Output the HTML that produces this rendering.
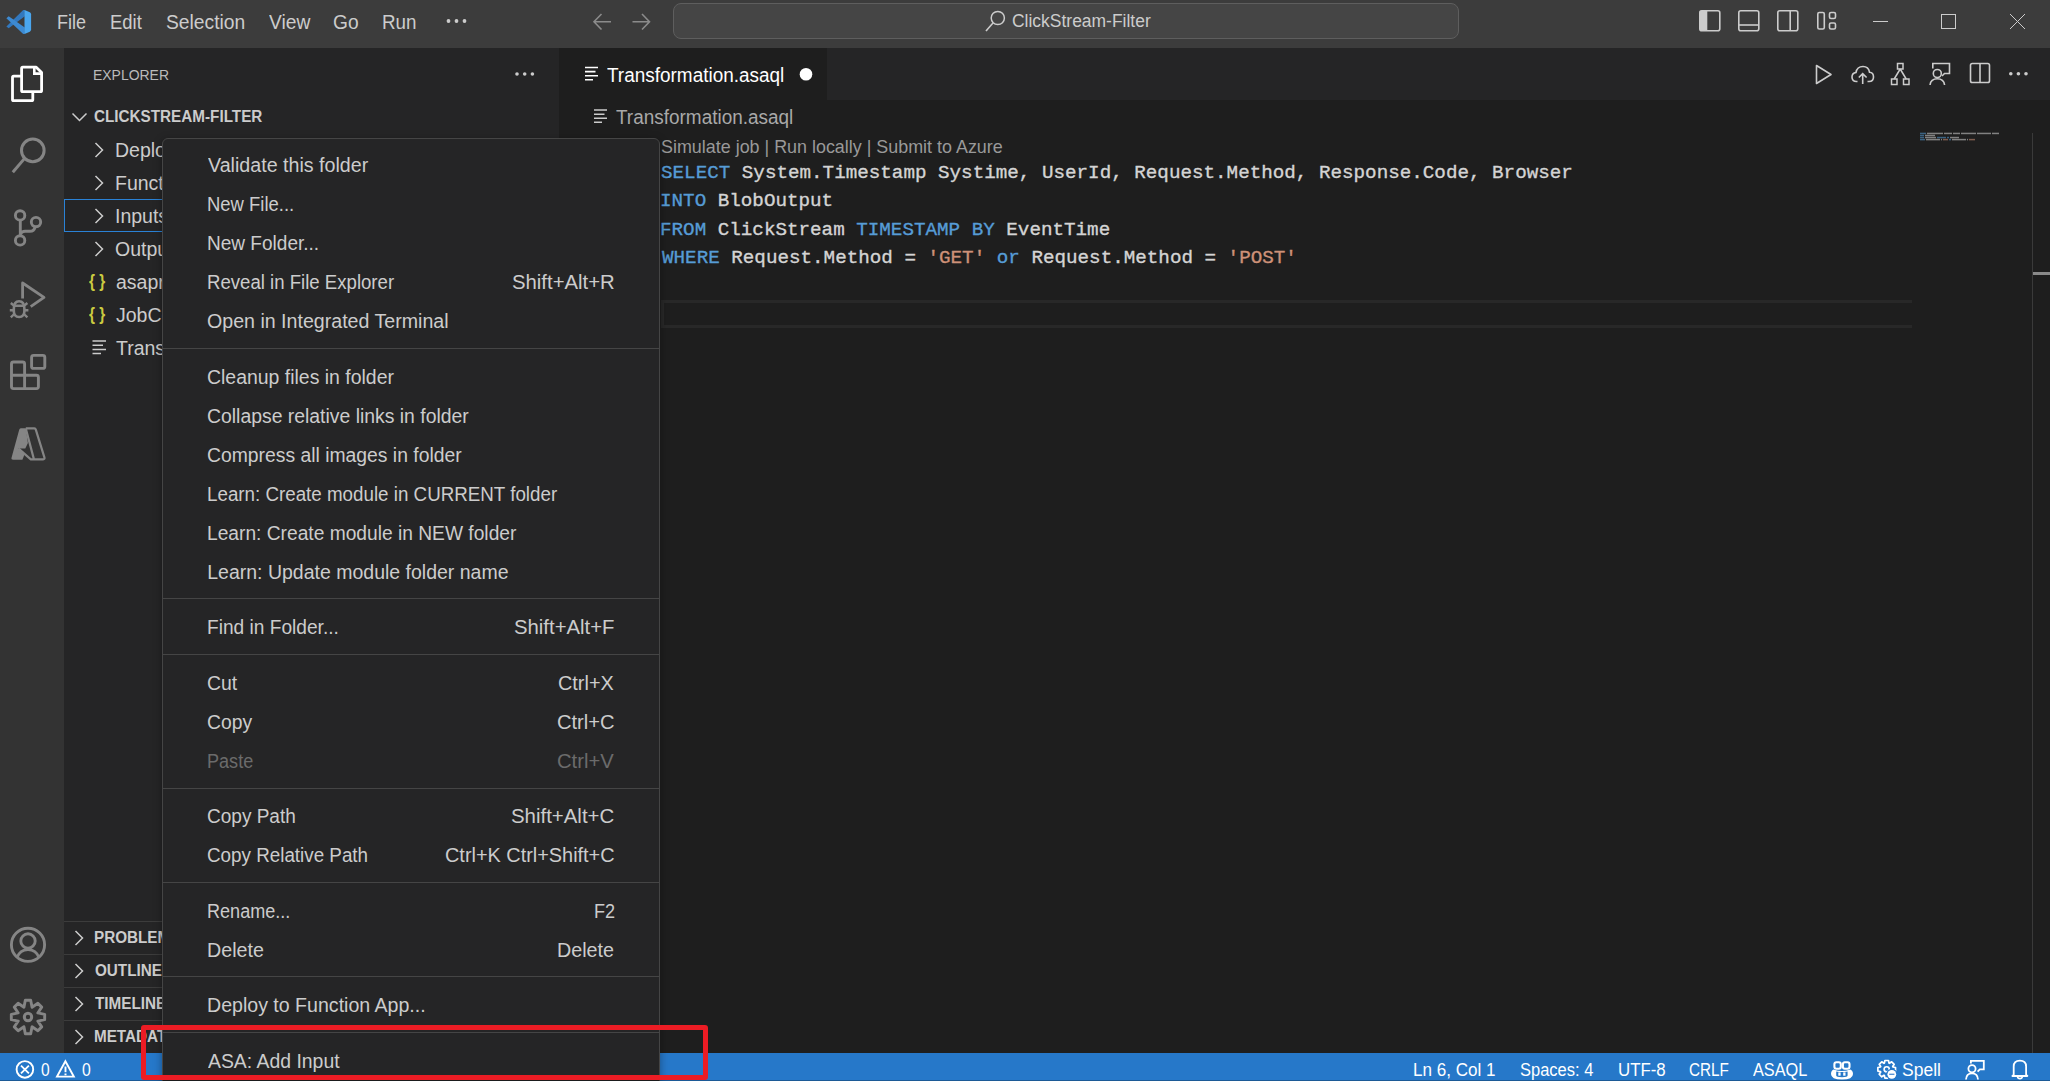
<!DOCTYPE html>
<html><head><meta charset="utf-8"><title>VS Code</title>
<style>
html,body{margin:0;padding:0;width:2050px;height:1081px;overflow:hidden;background:#1e1e1e;}
body{position:relative;font-family:'Liberation Sans', sans-serif;}
.t{position:absolute;white-space:pre;line-height:30px;height:30px;transform-origin:0 0;}
svg{overflow:visible;}
</style></head><body>
<div style="position:absolute;left:0px;top:0px;width:2050px;height:48px;background:#3c3c3c;"></div>
<div style="position:absolute;left:0px;top:48px;width:64px;height:1005px;background:#333333;"></div>
<div style="position:absolute;left:64px;top:48px;width:495px;height:1005px;background:#252526;"></div>
<div style="position:absolute;left:559px;top:48px;width:1491px;height:1005px;background:#1e1e1e;"></div>
<div style="position:absolute;left:559px;top:48px;width:1491px;height:52px;background:#252526;"></div>
<div style="position:absolute;left:559px;top:48px;width:268px;height:52px;background:#1e1e1e;"></div>
<div style="position:absolute;left:0px;top:1053px;width:2050px;height:28px;background:#2678c9;"></div>
<svg style="position:absolute;left:0;top:0" width="40" height="48" viewBox="0 0 40 48" fill="none"><path d="M6.4 26.4 L8.7 28.3 L24.8 16.3 V10.0 L23.2 9.9 Z" fill="#3278be"/><path d="M6.4 18.2 L8.7 16.2 L24.8 27.4 V33.8 L23.2 34.0 Z" fill="#3d8ad2"/><path d="M24.5 9.9 L29.8 12.2 Q31.1 12.9 31.1 14.3 V29.6 Q31.1 31.0 29.8 31.7 L24.5 34.0 Z" fill="#4aa6ee"/></svg>
<div class="t" style="left:56.52px;top:7.20px;font-size:20.5px;color:#cccccc;font-weight:normal;font-family:'Liberation Sans', sans-serif;transform:scaleX(0.8781);">File</div>
<div class="t" style="left:109.60px;top:7.20px;font-size:20.5px;color:#cccccc;font-weight:normal;font-family:'Liberation Sans', sans-serif;transform:scaleX(0.9000);">Edit</div>
<div class="t" style="left:165.76px;top:7.20px;font-size:20.5px;color:#cccccc;font-weight:normal;font-family:'Liberation Sans', sans-serif;transform:scaleX(0.9398);">Selection</div>
<div class="t" style="left:268.80px;top:7.20px;font-size:20.5px;color:#cccccc;font-weight:normal;font-family:'Liberation Sans', sans-serif;transform:scaleX(0.9364);">View</div>
<div class="t" style="left:332.77px;top:7.20px;font-size:20.5px;color:#cccccc;font-weight:normal;font-family:'Liberation Sans', sans-serif;transform:scaleX(0.9346);">Go</div>
<div class="t" style="left:382.08px;top:7.20px;font-size:20.5px;color:#cccccc;font-weight:normal;font-family:'Liberation Sans', sans-serif;transform:scaleX(0.9167);">Run</div>
<svg style="position:absolute;left:445px;top:15px;" width="24" height="12" viewBox="0 0 24 12" fill="none"><circle cx="3.5" cy="6" r="1.9" fill="#cccccc"/><circle cx="11.5" cy="6" r="1.9" fill="#cccccc"/><circle cx="19.5" cy="6" r="1.9" fill="#cccccc"/></svg>
<svg style="position:absolute;left:590px;top:10px;" width="24" height="24" viewBox="0 0 24 24" fill="none"><path d="M4 11.7 H21 M11.5 4 L4 11.7 L11.5 19.5" stroke="#8b8b8b" stroke-width="1.6"/></svg>
<svg style="position:absolute;left:630px;top:10px;" width="24" height="24" viewBox="0 0 24 24" fill="none"><path d="M2.5 11.7 H19.5 M12 4 L19.5 11.7 L12 19.5" stroke="#8b8b8b" stroke-width="1.6"/></svg>
<div style="position:absolute;left:673px;top:3px;width:786px;height:36px;background:#454545;border:1px solid #5e5e5e;border-radius:8px;box-sizing:border-box;"></div>
<svg style="position:absolute;left:982px;top:8px;" width="24" height="26" viewBox="0 0 24 26" fill="none"><circle cx="15.8" cy="10" r="6.6" stroke="#cccccc" stroke-width="1.5"/><path d="M11.2 14.8 L4 23" stroke="#cccccc" stroke-width="1.6"/></svg>
<div class="t" style="left:1012.49px;top:6.45px;font-size:19.2px;color:#cccccc;font-weight:normal;font-family:'Liberation Sans', sans-serif;transform:scaleX(0.9099);">ClickStream-Filter</div>
<svg style="position:absolute;left:1697px;top:8px;" width="26" height="26" viewBox="0 0 26 26" fill="none"><rect x="2.8" y="2.8" width="20" height="20" rx="2" stroke="#cccccc" stroke-width="1.6"/><rect x="2.8" y="2.8" width="7.5" height="20" fill="#cccccc"/></svg>
<svg style="position:absolute;left:1736px;top:8px;" width="26" height="26" viewBox="0 0 26 26" fill="none"><rect x="2.8" y="2.8" width="20" height="20" rx="2" stroke="#cccccc" stroke-width="1.6"/><path d="M2.8 17 H22.8" stroke="#cccccc" stroke-width="1.6"/></svg>
<svg style="position:absolute;left:1775px;top:8px;" width="26" height="26" viewBox="0 0 26 26" fill="none"><rect x="2.8" y="2.8" width="20" height="20" rx="2" stroke="#cccccc" stroke-width="1.6"/><path d="M15.2 2.8 V22.8" stroke="#cccccc" stroke-width="1.6"/></svg>
<svg style="position:absolute;left:1815px;top:8px;" width="26" height="26" viewBox="0 0 26 26" fill="none"><rect x="2.8" y="4.5" width="6.5" height="16.5" rx="1.5" stroke="#cccccc" stroke-width="1.6"/><rect x="14.5" y="4.5" width="6" height="6" rx="1.5" stroke="#cccccc" stroke-width="1.6"/><rect x="14.5" y="15" width="6" height="6" rx="1.5" stroke="#cccccc" stroke-width="1.6"/></svg>
<svg style="position:absolute;left:1870px;top:10px;" width="22" height="22" viewBox="0 0 22 22" fill="none"><path d="M3 11.5 H18" stroke="#cccccc" stroke-width="1"/></svg>
<svg style="position:absolute;left:1938px;top:10px;" width="22" height="22" viewBox="0 0 22 22" fill="none"><rect x="3.5" y="4.5" width="14" height="14" stroke="#cccccc" stroke-width="1"/></svg>
<svg style="position:absolute;left:2007px;top:10px;" width="22" height="22" viewBox="0 0 22 22" fill="none"><path d="M3 4 L18 19 M18 4 L3 19" stroke="#cccccc" stroke-width="1"/></svg>
<svg style="position:absolute;left:0;top:0" width="64" height="1053" viewBox="0 0 64 1053" fill="none">
<path d="M21.6 68.4 Q21.6 67.2 22.8 67.2 H36.2 L41.6 72.6 V90.5 Q41.6 91.7 40.4 91.7 H22.8 Q21.6 91.7 21.6 90.5 Z" stroke="#ffffff" stroke-width="2.8" stroke-linejoin="round"/>
<path d="M34.3 67.5 V73.6 H41.4" stroke="#ffffff" stroke-width="2.6"/>
<path d="M21.6 76.2 H13.7 Q12.5 76.2 12.5 77.4 V99.4 Q12.5 100.6 13.7 100.6 H31.6 Q32.8 100.6 32.8 99.4 V91.7" stroke="#ffffff" stroke-width="2.8" stroke-linejoin="round"/>

<circle cx="32.8" cy="150.4" r="11.3" stroke="#858585" stroke-width="3"/>
<path d="M24.4 158.6 L12.8 172.2" stroke="#858585" stroke-width="3"/>

<circle cx="20.1" cy="215.4" r="4.7" stroke="#858585" stroke-width="2.9"/>
<circle cx="20.1" cy="240.4" r="4.7" stroke="#858585" stroke-width="2.9"/>
<circle cx="36" cy="222.1" r="4.7" stroke="#858585" stroke-width="2.9"/>
<path d="M20.3 220 V235.5 M20.3 234.5 Q21.8 231.3 25 231.3 H30 Q34 231.3 35.2 226.8" stroke="#858585" stroke-width="2.9"/>

<path d="M22.6 298.6 V283 L44 297.4 L30.7 306.6" stroke="#858585" stroke-width="2.8" stroke-linejoin="round"/>
<path d="M13.8 309 Q13.8 301.3 19.1 301.3 Q24.4 301.3 24.4 309 V311 Q24.4 317 19.1 317 Q13.8 317 13.8 311 Z" stroke="#858585" stroke-width="2.6"/>
<path d="M14 305.8 H24.2 M10.8 303 L14.5 306 M27.4 303 L23.7 306 M9.8 310.2 H13.8 M28.4 310.2 H24.4 M10.8 317.3 L14.3 314 M27.4 317.3 L23.9 314" stroke="#858585" stroke-width="2.4"/>

<path d="M13.5 362 H22.6 Q24.6 362 24.6 364 V375.2 H36.4 Q38.4 375.2 38.4 377.2 V386.6 Q38.4 388.6 36.4 388.6 H13.5 Q11.5 388.6 11.5 386.6 V364 Q11.5 362 13.5 362 Z M11.5 375.2 H24.6 V388.6" stroke="#858585" stroke-width="2.9" stroke-linejoin="round"/>
<rect x="31.6" y="355.4" width="13.2" height="13" rx="2" stroke="#858585" stroke-width="2.9"/>

<path d="M20.8 428.2 H25.8 L27.9 443 L25.3 448.4 H18.4 L24.6 454.2 L22.4 459.8 H13.2 Q10.9 459.8 11.6 457.6 L19.2 429.8 Q19.6 428.2 20.8 428.2 Z" fill="#858585"/>
<path d="M25.8 428.3 H34.4 Q35.4 428.3 35.8 429.6 L44.4 457.3 Q45 459.3 43.2 459.3 H30.8 L18.6 448.6 M25.8 428.6 L33.9 459.1" stroke="#858585" stroke-width="2.2" stroke-linejoin="round"/>

<circle cx="28" cy="944.8" r="16.6" stroke="#858585" stroke-width="2.9"/>
<circle cx="28" cy="941" r="7.2" stroke="#858585" stroke-width="2.9"/>
<path d="M17 957.6 Q20 949.6 28 949.6 Q36 949.6 39 957.6" stroke="#858585" stroke-width="2.9"/>

<path d="M44.68 1014.31 L44.68 1019.69 L37.79 1021.06 L41.70 1026.89 L37.89 1030.70 L32.06 1026.79 L30.69 1033.68 L25.31 1033.68 L23.94 1026.79 L18.11 1030.70 L14.30 1026.89 L18.21 1021.06 L11.32 1019.69 L11.32 1014.31 L18.21 1012.94 L14.30 1007.11 L18.11 1003.30 L23.94 1007.21 L25.31 1000.32 L30.69 1000.32 L32.06 1007.21 L37.89 1003.30 L41.70 1007.11 L37.79 1012.94 Z" stroke="#858585" stroke-width="2.9" stroke-linejoin="round"/>
<circle cx="28" cy="1017" r="3.7" stroke="#858585" stroke-width="3"/>
</svg>
<div class="t" style="left:93.40px;top:60.43px;font-size:15.5px;color:#bbbbbb;font-weight:normal;font-family:'Liberation Sans', sans-serif;transform:scaleX(0.9000);">EXPLORER</div>
<svg style="position:absolute;left:513px;top:66px;" width="24" height="16" viewBox="0 0 24 16" fill="none"><circle cx="4.0" cy="8" r="1.8" fill="#cccccc"/><circle cx="11.7" cy="8" r="1.8" fill="#cccccc"/><circle cx="19.4" cy="8" r="1.8" fill="#cccccc"/></svg>
<svg style="position:absolute;left:68px;top:108px;" width="22" height="18" viewBox="0 0 22 18" fill="none"><path d="M4.5 5.5 L11.5 12.5 L18.5 5.5" stroke="#cccccc" stroke-width="1.5"/></svg>
<div class="t" style="left:94.20px;top:102.46px;font-size:16px;color:#cccccc;font-weight:bold;font-family:'Liberation Sans', sans-serif;transform:scaleX(0.9534);">CLICKSTREAM-FILTER</div>
<div style="position:absolute;left:64px;top:199px;width:495px;height:33px;background:transparent;border:1px solid #2a82d6;box-sizing:border-box;"></div>
<svg style="position:absolute;left:90px;top:140px;" width="18" height="20" viewBox="0 0 18 20" fill="none"><path d="M5.5 3 L12.5 10 L5.5 17" stroke="#cccccc" stroke-width="1.5"/></svg>
<div class="t" style="left:115.00px;top:135.24px;font-size:19.5px;color:#cccccc;font-weight:normal;font-family:'Liberation Sans', sans-serif;">Deployment</div>
<svg style="position:absolute;left:90px;top:173px;" width="18" height="20" viewBox="0 0 18 20" fill="none"><path d="M5.5 3 L12.5 10 L5.5 17" stroke="#cccccc" stroke-width="1.5"/></svg>
<div class="t" style="left:115.00px;top:168.24px;font-size:19.5px;color:#cccccc;font-weight:normal;font-family:'Liberation Sans', sans-serif;">Functions</div>
<svg style="position:absolute;left:90px;top:206px;" width="18" height="20" viewBox="0 0 18 20" fill="none"><path d="M5.5 3 L12.5 10 L5.5 17" stroke="#cccccc" stroke-width="1.5"/></svg>
<div class="t" style="left:115.00px;top:201.24px;font-size:19.5px;color:#cccccc;font-weight:normal;font-family:'Liberation Sans', sans-serif;">Inputs</div>
<svg style="position:absolute;left:90px;top:239px;" width="18" height="20" viewBox="0 0 18 20" fill="none"><path d="M5.5 3 L12.5 10 L5.5 17" stroke="#cccccc" stroke-width="1.5"/></svg>
<div class="t" style="left:115.00px;top:234.24px;font-size:19.5px;color:#cccccc;font-weight:normal;font-family:'Liberation Sans', sans-serif;">Outputs</div>
<div class="t" style="left:88.60px;top:266.26px;font-size:18px;color:#cbcb41;font-weight:bold;font-family:'Liberation Sans', sans-serif;transform:scaleX(0.8526);">{ }</div>
<div class="t" style="left:116.00px;top:267.24px;font-size:19.5px;color:#cccccc;font-weight:normal;font-family:'Liberation Sans', sans-serif;">asaproj.json</div>
<div class="t" style="left:88.60px;top:299.26px;font-size:18px;color:#cbcb41;font-weight:bold;font-family:'Liberation Sans', sans-serif;transform:scaleX(0.8526);">{ }</div>
<div class="t" style="left:116.00px;top:300.24px;font-size:19.5px;color:#cccccc;font-weight:normal;font-family:'Liberation Sans', sans-serif;">JobConfig.json</div>
<svg style="position:absolute;left:90px;top:339px;" width="18" height="16" viewBox="0 0 18 16" fill="none"><path d="M2.5 2 H16 M2.5 6.3 H13 M2.5 10.5 H16 M2.5 14.5 H11" stroke="#cccccc" stroke-width="1.6"/></svg>
<div class="t" style="left:116.00px;top:333.24px;font-size:19.5px;color:#cccccc;font-weight:normal;font-family:'Liberation Sans', sans-serif;">Transformation.asaql</div>
<div style="position:absolute;left:64px;top:921px;width:495px;height:1px;background:#3c3c3c;"></div>
<svg style="position:absolute;left:70px;top:928px;" width="18" height="20" viewBox="0 0 18 20" fill="none"><path d="M5.5 3 L12.5 10 L5.5 17" stroke="#cccccc" stroke-width="1.5"/></svg>
<div class="t" style="left:93.65px;top:922.96px;font-size:16px;color:#cccccc;font-weight:bold;font-family:'Liberation Sans', sans-serif;transform:scaleX(0.9530);">PROBLEMS</div>
<div style="position:absolute;left:64px;top:954px;width:495px;height:1px;background:#3c3c3c;"></div>
<svg style="position:absolute;left:70px;top:961px;" width="18" height="20" viewBox="0 0 18 20" fill="none"><path d="M5.5 3 L12.5 10 L5.5 17" stroke="#cccccc" stroke-width="1.5"/></svg>
<div class="t" style="left:94.60px;top:955.96px;font-size:16px;color:#cccccc;font-weight:bold;font-family:'Liberation Sans', sans-serif;transform:scaleX(0.9530);">OUTLINE</div>
<div style="position:absolute;left:64px;top:987px;width:495px;height:1px;background:#3c3c3c;"></div>
<svg style="position:absolute;left:70px;top:994px;" width="18" height="20" viewBox="0 0 18 20" fill="none"><path d="M5.5 3 L12.5 10 L5.5 17" stroke="#cccccc" stroke-width="1.5"/></svg>
<div class="t" style="left:94.60px;top:988.96px;font-size:16px;color:#cccccc;font-weight:bold;font-family:'Liberation Sans', sans-serif;transform:scaleX(0.9530);">TIMELINE</div>
<div style="position:absolute;left:64px;top:1020px;width:495px;height:1px;background:#3c3c3c;"></div>
<svg style="position:absolute;left:70px;top:1027px;" width="18" height="20" viewBox="0 0 18 20" fill="none"><path d="M5.5 3 L12.5 10 L5.5 17" stroke="#cccccc" stroke-width="1.5"/></svg>
<div class="t" style="left:93.65px;top:1021.96px;font-size:16px;color:#cccccc;font-weight:bold;font-family:'Liberation Sans', sans-serif;transform:scaleX(0.9530);">METADATA</div>
<svg style="position:absolute;left:582px;top:64px;" width="18" height="18" viewBox="0 0 18 18" fill="none"><path d="M3 3.5 H16 M3 7.6 H13.5 M3 11.7 H16 M3 15.7 H11" stroke="#ffffff" stroke-width="1.6"/></svg>
<div class="t" style="left:607.40px;top:60.14px;font-size:19.5px;color:#ffffff;font-weight:normal;font-family:'Liberation Sans', sans-serif;transform:scaleX(0.9720);">Transformation.asaql</div>
<svg style="position:absolute;left:798px;top:66px;" width="16" height="16" viewBox="0 0 16 16" fill="none"><circle cx="8" cy="8.3" r="6.3" fill="#ffffff"/></svg>
<svg style="position:absolute;left:1812px;top:62px;" width="24" height="24" viewBox="0 0 24 24" fill="none"><path d="M4.5 3.5 L19 12.5 L4.5 21.5 Z" stroke="#cccccc" stroke-width="1.6" stroke-linejoin="round"/></svg>
<svg style="position:absolute;left:1850px;top:62px;" width="26" height="24" viewBox="0 0 26 24" fill="none"><path d="M7.5 19.5 H6.5 Q2 19.5 2 15 Q2 11 6 10.5 Q7 4.5 13 4.5 Q18.5 4.5 19.5 10.2 Q23.5 10.5 23.5 15 Q23.5 19.5 19 19.5 H17.5" stroke="#cccccc" stroke-width="1.6"/><path d="M12.7 22 V12 M8.8 15.5 L12.7 11.6 L16.6 15.5" stroke="#cccccc" stroke-width="1.6"/></svg>
<svg style="position:absolute;left:1888px;top:61px;" width="26" height="26" viewBox="0 0 26 26" fill="none"><rect x="9.5" y="2.5" width="5.5" height="5.5" stroke="#cccccc" stroke-width="1.5"/><rect x="3.5" y="18" width="5.5" height="5.5" stroke="#cccccc" stroke-width="1.5"/><rect x="15.5" y="18" width="5.5" height="5.5" stroke="#cccccc" stroke-width="1.5"/><path d="M12.2 8 L6.2 18 M12.2 8 L18.2 18" stroke="#cccccc" stroke-width="1.5"/></svg>
<svg style="position:absolute;left:1928px;top:61px;" width="26" height="26" viewBox="0 0 26 26" fill="none"><path d="M4.8 7.5 V2.5 H21.5 V12.5 H16.5 L14 15" stroke="#cccccc" stroke-width="1.6"/><circle cx="9.3" cy="12.5" r="4" stroke="#cccccc" stroke-width="1.6"/><path d="M2 24 Q2.8 17.8 9.3 17.8 Q15.8 17.8 16.6 24" stroke="#cccccc" stroke-width="1.6"/></svg>
<svg style="position:absolute;left:1968px;top:61px;" width="24" height="24" viewBox="0 0 24 24" fill="none"><rect x="2.5" y="2.5" width="19" height="19" rx="1.8" stroke="#cccccc" stroke-width="1.6"/><path d="M12 2.5 V21.5" stroke="#cccccc" stroke-width="1.6"/></svg>
<svg style="position:absolute;left:2006px;top:66px;" width="26" height="16" viewBox="0 0 26 16" fill="none"><circle cx="4.8" cy="7.7" r="1.8" fill="#cccccc"/><circle cx="12.399999999999999" cy="7.7" r="1.8" fill="#cccccc"/><circle cx="20.0" cy="7.7" r="1.8" fill="#cccccc"/></svg>
<svg style="position:absolute;left:591px;top:106px;" width="18" height="18" viewBox="0 0 18 18" fill="none"><path d="M3 4 H16 M3 8.2 H13.5 M3 12.3 H16 M3 16.3 H11" stroke="#cccccc" stroke-width="1.6"/></svg>
<div class="t" style="left:616.30px;top:102.34px;font-size:19.5px;color:#a9a9a9;font-weight:normal;font-family:'Liberation Sans', sans-serif;transform:scaleX(0.9720);">Transformation.asaql</div>
<div class="t" style="left:660.59px;top:131.63px;font-size:17.8px;color:#999999;font-weight:normal;font-family:'Liberation Sans', sans-serif;transform:scaleX(1.0071);">Simulate job | Run locally | Submit to Azure</div>
<div class="t" style="left:661.00px;top:157.87px;font-size:19.24px;color:#d4d4d4;font-weight:normal;font-family:'Liberation Mono', monospace;white-space:pre;-webkit-text-stroke:0.35px currentColor;"><span style="color:#569cd6">SELECT</span><span style="color:#d4d4d4"> System.Timestamp Systime, UserId, Request.Method, Response.Code, Browser</span></div>
<div class="t" style="left:660.00px;top:186.37px;font-size:19.24px;color:#d4d4d4;font-weight:normal;font-family:'Liberation Mono', monospace;white-space:pre;-webkit-text-stroke:0.35px currentColor;"><span style="color:#569cd6">INTO</span><span style="color:#d4d4d4"> BlobOutput</span></div>
<div class="t" style="left:660.00px;top:214.87px;font-size:19.24px;color:#d4d4d4;font-weight:normal;font-family:'Liberation Mono', monospace;white-space:pre;-webkit-text-stroke:0.35px currentColor;"><span style="color:#569cd6">FROM</span><span style="color:#d4d4d4"> ClickStream </span><span style="color:#569cd6">TIMESTAMP</span><span style="color:#d4d4d4"> </span><span style="color:#569cd6">BY</span><span style="color:#d4d4d4"> EventTime</span></div>
<div class="t" style="left:662.00px;top:243.37px;font-size:19.24px;color:#d4d4d4;font-weight:normal;font-family:'Liberation Mono', monospace;white-space:pre;-webkit-text-stroke:0.35px currentColor;"><span style="color:#569cd6">WHERE</span><span style="color:#d4d4d4"> Request.Method = </span><span style="color:#ce9178">'GET'</span><span style="color:#d4d4d4"> </span><span style="color:#569cd6">or</span><span style="color:#d4d4d4"> Request.Method = </span><span style="color:#ce9178">'POST'</span></div>
<div style="position:absolute;left:661px;top:300px;width:1251px;height:28px;background:transparent;border:3px solid #282828;border-right:none;box-sizing:border-box;"></div>
<svg style="position:absolute;left:1920px;top:133px;" width="90" height="10" viewBox="0 0 90 10" fill="none"><rect x="0.0" y="-0.30" width="6.0" height="1.5" fill="#569cd6" opacity="0.55"/><rect x="7.0" y="-0.30" width="16.0" height="1.5" fill="#d4d4d4" opacity="0.55"/><rect x="24.0" y="-0.30" width="8.0" height="1.5" fill="#d4d4d4" opacity="0.55"/><rect x="33.0" y="-0.30" width="7.0" height="1.5" fill="#d4d4d4" opacity="0.55"/><rect x="41.0" y="-0.30" width="15.0" height="1.5" fill="#d4d4d4" opacity="0.55"/><rect x="57.0" y="-0.30" width="14.0" height="1.5" fill="#d4d4d4" opacity="0.55"/><rect x="72.0" y="-0.30" width="7.0" height="1.5" fill="#d4d4d4" opacity="0.55"/><rect x="0.0" y="1.75" width="4.0" height="1.5" fill="#569cd6" opacity="0.55"/><rect x="5.0" y="1.75" width="10.0" height="1.5" fill="#d4d4d4" opacity="0.55"/><rect x="0.0" y="3.80" width="4.0" height="1.5" fill="#569cd6" opacity="0.55"/><rect x="5.0" y="3.80" width="11.0" height="1.5" fill="#d4d4d4" opacity="0.55"/><rect x="17.0" y="3.80" width="9.0" height="1.5" fill="#569cd6" opacity="0.55"/><rect x="27.0" y="3.80" width="2.0" height="1.5" fill="#569cd6" opacity="0.55"/><rect x="30.0" y="3.80" width="9.0" height="1.5" fill="#d4d4d4" opacity="0.55"/><rect x="0.0" y="5.85" width="5.0" height="1.5" fill="#569cd6" opacity="0.55"/><rect x="6.0" y="5.85" width="14.0" height="1.5" fill="#d4d4d4" opacity="0.55"/><rect x="21.0" y="5.85" width="1.0" height="1.5" fill="#d4d4d4" opacity="0.55"/><rect x="23.0" y="5.85" width="5.0" height="1.5" fill="#ce9178" opacity="0.55"/><rect x="29.0" y="5.85" width="2.0" height="1.5" fill="#569cd6" opacity="0.55"/><rect x="32.0" y="5.85" width="14.0" height="1.5" fill="#d4d4d4" opacity="0.55"/><rect x="47.0" y="5.85" width="1.0" height="1.5" fill="#d4d4d4" opacity="0.55"/><rect x="49.0" y="5.85" width="6.0" height="1.5" fill="#ce9178" opacity="0.55"/></svg>
<div style="position:absolute;left:2032px;top:133px;width:1px;height:920px;background:#3a3a3a;"></div>
<div style="position:absolute;left:2033px;top:272px;width:17px;height:3px;background:#8a8a8a;"></div>
<svg style="position:absolute;left:0;top:0" width="2050" height="1081" viewBox="0 0 2050 1081" fill="none">
<circle cx="24.9" cy="1069.4" r="8.3" stroke="#ffffff" stroke-width="1.9"/>
<path d="M21 1065.6 L28.9 1073.4 M28.9 1065.6 L21 1073.4" stroke="#ffffff" stroke-width="1.8"/>
<path d="M65.4 1061.3 L73.8 1076.6 H57 Z" stroke="#ffffff" stroke-width="1.9" stroke-linejoin="miter"/>
<path d="M65.5 1066.5 V1072.2" stroke="#ffffff" stroke-width="1.9"/>
<rect x="64.5" y="1073.5" width="2" height="1.8" fill="#ffffff"/>

<rect x="1834.4" y="1062.25" width="6.4" height="6.55" rx="2" stroke="#ffffff" stroke-width="2.1"/>
<rect x="1842.9" y="1062.25" width="6.6" height="6.55" rx="2" stroke="#ffffff" stroke-width="2.1"/>
<path d="M1833.5 1069.5 Q1831 1070.5 1831 1074 Q1831 1079.6 1842 1079.6 Q1853 1079.6 1853 1074 Q1853 1070.5 1850.3 1069.5 Q1846 1071 1841.9 1071 Q1837.7 1071 1833.5 1069.5 Z" fill="#ffffff"/>
<path d="M1836.2 1071.4 Q1842 1072.5 1847.6 1071.4 V1075.5 Q1847.6 1077.2 1842 1077.2 Q1836.2 1077.2 1836.2 1075.5 Z" fill="#2678c9"/>
<rect x="1838.3" y="1072.4" width="2.3" height="3.3" fill="#ffffff"/>
<rect x="1843.2" y="1072.4" width="2.3" height="3.3" fill="#ffffff"/>

<path d="M1895.52 1067.51 L1895.52 1071.09 L1892.88 1071.63 L1892.71 1072.02 L1894.20 1074.27 L1891.67 1076.80 L1889.42 1075.31 L1889.03 1075.48 L1888.49 1078.12 L1884.91 1078.12 L1884.37 1075.48 L1883.98 1075.31 L1881.73 1076.80 L1879.20 1074.27 L1880.69 1072.02 L1880.52 1071.63 L1877.88 1071.09 L1877.88 1067.51 L1880.52 1066.97 L1880.69 1066.58 L1879.20 1064.33 L1881.73 1061.80 L1883.98 1063.29 L1884.37 1063.12 L1884.91 1060.48 L1888.49 1060.48 L1889.03 1063.12 L1889.42 1063.29 L1891.67 1061.80 L1894.20 1064.33 L1892.71 1066.58 L1892.88 1066.97 Z" stroke="#ffffff" stroke-width="1.7" stroke-linejoin="round"/>
<circle cx="1886.7" cy="1069.3" r="2.6" stroke="#ffffff" stroke-width="1.6"/>
<circle cx="1891.8" cy="1074.3" r="5.6" fill="#2678c9"/>
<circle cx="1891.8" cy="1074.3" r="4.4" fill="#ffffff"/>
<path d="M1889.2 1074.3 H1894.4" stroke="#5a94d4" stroke-width="1.4"/>

<path d="M1970.9 1063.6 V1060.8 H1983.8 V1069.3 H1979.8 L1977.6 1071.6" stroke="#ffffff" stroke-width="1.8"/>
<circle cx="1972" cy="1068.8" r="3.6" stroke="#ffffff" stroke-width="1.8"/>
<path d="M1966 1079.5 Q1966.3 1073.3 1972 1073.3 Q1977.7 1073.3 1978 1079.5" stroke="#ffffff" stroke-width="1.8"/>

<path d="M2013.7 1074.8 V1066.5 Q2013.7 1060.6 2019.9 1060.6 Q2026.1 1060.6 2026.1 1066.5 V1074.8 L2027.4 1076 H2012.4 Z" stroke="#ffffff" stroke-width="1.8" stroke-linejoin="round"/>
<path d="M2017.5 1076.6 Q2017.8 1078.6 2019.9 1078.6 Q2022 1078.6 2022.3 1076.6" stroke="#ffffff" stroke-width="1.6"/>
</svg>
<div class="t" style="left:40.90px;top:1054.64px;font-size:17.5px;color:#ffffff;font-weight:normal;font-family:'Liberation Sans', sans-serif;transform:scaleX(0.8900);">0</div>
<div class="t" style="left:81.50px;top:1054.64px;font-size:17.5px;color:#ffffff;font-weight:normal;font-family:'Liberation Sans', sans-serif;transform:scaleX(0.9000);">0</div>
<div class="t" style="left:1413.43px;top:1054.74px;font-size:17.5px;color:#ffffff;font-weight:normal;font-family:'Liberation Sans', sans-serif;transform:scaleX(0.9747);">Ln 6, Col 1</div>
<div class="t" style="left:1520.06px;top:1054.74px;font-size:17.5px;color:#ffffff;font-weight:normal;font-family:'Liberation Sans', sans-serif;transform:scaleX(0.9429);">Spaces: 4</div>
<div class="t" style="left:1617.64px;top:1054.74px;font-size:17.5px;color:#ffffff;font-weight:normal;font-family:'Liberation Sans', sans-serif;transform:scaleX(0.9625);">UTF-8</div>
<div class="t" style="left:1689.13px;top:1054.74px;font-size:17.5px;color:#ffffff;font-weight:normal;font-family:'Liberation Sans', sans-serif;transform:scaleX(0.8727);">CRLF</div>
<div class="t" style="left:1753.00px;top:1054.74px;font-size:17.5px;color:#ffffff;font-weight:normal;font-family:'Liberation Sans', sans-serif;transform:scaleX(0.9310);">ASAQL</div>
<div class="t" style="left:1902.00px;top:1054.74px;font-size:17.5px;color:#ffffff;font-weight:normal;font-family:'Liberation Sans', sans-serif;">Spell</div>
<div style="position:absolute;left:162px;top:138px;width:498px;height:960px;background:#252526;border:1px solid #454545;border-radius:6px;box-sizing:border-box;box-shadow:0 2px 8px rgba(0,0,0,0.36);"></div>
<div class="t" style="left:208.20px;top:150.24px;font-size:19.5px;color:#cccccc;font-weight:normal;font-family:'Liberation Sans', sans-serif;transform:scaleX(1.0082);">Validate this folder</div>
<div class="t" style="left:207.25px;top:189.24px;font-size:19.5px;color:#cccccc;font-weight:normal;font-family:'Liberation Sans', sans-serif;transform:scaleX(0.9467);">New File...</div>
<div class="t" style="left:207.22px;top:228.24px;font-size:19.5px;color:#cccccc;font-weight:normal;font-family:'Liberation Sans', sans-serif;transform:scaleX(0.9761);">New Folder...</div>
<div class="t" style="left:207.25px;top:267.24px;font-size:19.5px;color:#cccccc;font-weight:normal;font-family:'Liberation Sans', sans-serif;transform:scaleX(0.9538);">Reveal in File Explorer</div>
<div class="t" style="left:511.96px;top:267.24px;font-size:19.5px;color:#cccccc;font-weight:normal;font-family:'Liberation Sans', sans-serif;transform:scaleX(1.0412);">Shift+Alt+R</div>
<div class="t" style="left:207.19px;top:306.24px;font-size:19.5px;color:#cccccc;font-weight:normal;font-family:'Liberation Sans', sans-serif;transform:scaleX(1.0054);">Open in Integrated Terminal</div>
<div style="position:absolute;left:163px;top:348px;width:496px;height:1px;background:#454545;"></div>
<div class="t" style="left:207.20px;top:361.74px;font-size:19.5px;color:#cccccc;font-weight:normal;font-family:'Liberation Sans', sans-serif;transform:scaleX(0.9968);">Cleanup files in folder</div>
<div class="t" style="left:207.21px;top:400.74px;font-size:19.5px;color:#cccccc;font-weight:normal;font-family:'Liberation Sans', sans-serif;transform:scaleX(0.9939);">Collapse relative links in folder</div>
<div class="t" style="left:207.21px;top:439.74px;font-size:19.5px;color:#cccccc;font-weight:normal;font-family:'Liberation Sans', sans-serif;transform:scaleX(0.9914);">Compress all images in folder</div>
<div class="t" style="left:207.24px;top:478.74px;font-size:19.5px;color:#cccccc;font-weight:normal;font-family:'Liberation Sans', sans-serif;transform:scaleX(0.9625);">Learn: Create module in CURRENT folder</div>
<div class="t" style="left:207.22px;top:517.74px;font-size:19.5px;color:#cccccc;font-weight:normal;font-family:'Liberation Sans', sans-serif;transform:scaleX(0.9843);">Learn: Create module in NEW folder</div>
<div class="t" style="left:207.20px;top:556.74px;font-size:19.5px;color:#cccccc;font-weight:normal;font-family:'Liberation Sans', sans-serif;">Learn: Update module folder name</div>
<div style="position:absolute;left:163px;top:598px;width:496px;height:1px;background:#454545;"></div>
<div class="t" style="left:207.22px;top:612.24px;font-size:19.5px;color:#cccccc;font-weight:normal;font-family:'Liberation Sans', sans-serif;transform:scaleX(0.9811);">Find in Folder...</div>
<div class="t" style="left:513.96px;top:612.24px;font-size:19.5px;color:#cccccc;font-weight:normal;font-family:'Liberation Sans', sans-serif;transform:scaleX(1.0421);">Shift+Alt+F</div>
<div style="position:absolute;left:163px;top:654px;width:496px;height:1px;background:#454545;"></div>
<div class="t" style="left:207.21px;top:667.74px;font-size:19.5px;color:#cccccc;font-weight:normal;font-family:'Liberation Sans', sans-serif;transform:scaleX(0.9933);">Cut</div>
<div class="t" style="left:557.98px;top:667.74px;font-size:19.5px;color:#cccccc;font-weight:normal;font-family:'Liberation Sans', sans-serif;transform:scaleX(1.0185);">Ctrl+X</div>
<div class="t" style="left:207.21px;top:706.74px;font-size:19.5px;color:#cccccc;font-weight:normal;font-family:'Liberation Sans', sans-serif;transform:scaleX(0.9889);">Copy</div>
<div class="t" style="left:557.27px;top:706.74px;font-size:19.5px;color:#cccccc;font-weight:normal;font-family:'Liberation Sans', sans-serif;transform:scaleX(1.0315);">Ctrl+C</div>
<div class="t" style="left:207.27px;top:745.74px;font-size:19.5px;color:#6b6b6b;font-weight:normal;font-family:'Liberation Sans', sans-serif;transform:scaleX(0.9271);">Paste</div>
<div class="t" style="left:556.96px;top:745.74px;font-size:19.5px;color:#6b6b6b;font-weight:normal;font-family:'Liberation Sans', sans-serif;transform:scaleX(1.0370);">Ctrl+V</div>
<div style="position:absolute;left:163px;top:788px;width:496px;height:1px;background:#454545;"></div>
<div class="t" style="left:207.22px;top:801.24px;font-size:19.5px;color:#cccccc;font-weight:normal;font-family:'Liberation Sans', sans-serif;transform:scaleX(0.9753);">Copy Path</div>
<div class="t" style="left:511.45px;top:801.24px;font-size:19.5px;color:#cccccc;font-weight:normal;font-family:'Liberation Sans', sans-serif;transform:scaleX(1.0464);">Shift+Alt+C</div>
<div class="t" style="left:207.24px;top:840.24px;font-size:19.5px;color:#cccccc;font-weight:normal;font-family:'Liberation Sans', sans-serif;transform:scaleX(0.9648);">Copy Relative Path</div>
<div class="t" style="left:444.78px;top:840.24px;font-size:19.5px;color:#cccccc;font-weight:normal;font-family:'Liberation Sans', sans-serif;transform:scaleX(1.0194);">Ctrl+K Ctrl+Shift+C</div>
<div style="position:absolute;left:163px;top:882px;width:496px;height:1px;background:#454545;"></div>
<div class="t" style="left:207.27px;top:895.74px;font-size:19.5px;color:#cccccc;font-weight:normal;font-family:'Liberation Sans', sans-serif;transform:scaleX(0.9261);">Rename...</div>
<div class="t" style="left:593.57px;top:895.74px;font-size:19.5px;color:#cccccc;font-weight:normal;font-family:'Liberation Sans', sans-serif;transform:scaleX(0.9286);">F2</div>
<div class="t" style="left:207.19px;top:934.74px;font-size:19.5px;color:#cccccc;font-weight:normal;font-family:'Liberation Sans', sans-serif;transform:scaleX(1.0091);">Delete</div>
<div class="t" style="left:557.39px;top:934.74px;font-size:19.5px;color:#cccccc;font-weight:normal;font-family:'Liberation Sans', sans-serif;transform:scaleX(1.0109);">Delete</div>
<div style="position:absolute;left:163px;top:976px;width:496px;height:1px;background:#454545;"></div>
<div class="t" style="left:207.20px;top:990.24px;font-size:19.5px;color:#cccccc;font-weight:normal;font-family:'Liberation Sans', sans-serif;transform:scaleX(1.0037);">Deploy to Function App...</div>
<div style="position:absolute;left:163px;top:1032px;width:496px;height:1px;background:#454545;"></div>
<div class="t" style="left:208.20px;top:1045.74px;font-size:19.5px;color:#cccccc;font-weight:normal;font-family:'Liberation Sans', sans-serif;transform:scaleX(0.9947);">ASA: Add Input</div>
<div style="position:absolute;left:141px;top:1025px;width:567px;height:55px;border:5px solid #ec1c24;border-radius:3px;box-sizing:border-box;"></div>
<div style="position:absolute;left:0;top:1080px;width:2050px;height:1px;background:rgba(0,0,0,0.25)"></div>
</body></html>
